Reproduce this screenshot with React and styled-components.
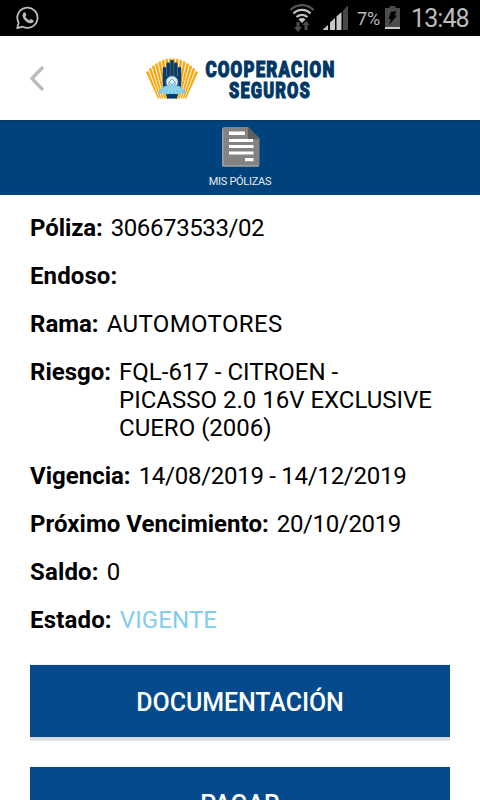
import React from 'react';
import styled, { createGlobalStyle } from 'styled-components';

const Global = createGlobalStyle`
  * { box-sizing: border-box; }
  html, body { margin: 0; height: 100%; overflow: hidden; background: #fff; }
  body { font-family: Roboto, sans-serif; }
`;

const Screen = styled.div`
  display: flex;
  flex-direction: column;
  width: 480px;
  height: 800px;
  overflow: hidden;
  background: #fff;
  color: #000;
`;

const StatusBar = styled.div`
  display: flex;
  flex: none;
  align-items: center;
  justify-content: space-between;
  height: 36px;
  padding: 0 12px 0 16px;
  background: #000;
  color: #bcbcbc;
`;

const StatusGroup = styled.div`
  display: flex;
  align-items: center;
`;

const Network = styled.div`
  display: flex;
  align-items: center;
  gap: 8px;
`;

const Battery = styled.span`
  width: 24px;
  margin: 2px 4px 0 9px;
  font-size: 18px;
  line-height: 20px;
  white-space: nowrap;
`;

const Clock = styled.span`
  width: 57px;
  margin: 2px 0 0 11px;
  font-size: 25px;
  line-height: 30px;
  letter-spacing: -0.9px;
  white-space: nowrap;
`;

const Header = styled.header`
  display: grid;
  grid-template-columns: 145px 1fr 145px;
  align-items: center;
  flex: none;
  height: 84px;
`;

const BackButton = styled.button`
  display: flex;
  margin: 0 0 0 28px;
  padding: 0;
  width: 18px;
  border: 0;
  background: none;
`;

const TabBar = styled.nav`
  display: flex;
  flex: none;
  flex-direction: column;
  align-items: center;
  height: 75px;
  padding-top: 6px;
  border-top: 1px solid #14365e;
  background: #00427c;
`;

const TabLabel = styled.span`
  margin-top: 8px;
  color: #e4ebf2;
  font-size: 11px;
  line-height: 14px;
  letter-spacing: -0.3px;
`;

const Details = styled.dl`
  display: flex;
  flex: none;
  flex-direction: column;
  gap: 20px;
  margin: 0;
  padding: 19px 40px 0 30px;
`;

const Row = styled.div`
  display: flex;
  gap: 8px;
  font-size: 24px;
  line-height: 28px;
`;

const Label = styled.dt`
  flex: none;
  font-weight: 700;
  letter-spacing: ${(p) => p.$tracking || 0}px;
`;

const Value = styled.dd`
  margin: 0;
  color: ${(p) => (p.$active ? '#80cdf0' : '#000')};
  letter-spacing: ${(p) => p.$tracking || 0}px;
`;

const Actions = styled.div`
  display: flex;
  flex: none;
  flex-direction: column;
  gap: 30px;
  padding: 31px 30px 0;
`;

const ActionButton = styled.button`
  height: 72px;
  padding: 3px 0 0;
  border: 0;
  background: #044a8c;
  box-shadow: 0 3px 0 #d6dadd, 0 4px 0 #e9e9e9, 0 -1px 0 #f3f3f3;
  color: #fff;
  font-family: inherit;
  font-size: 25px;
  font-weight: 500;
  line-height: 30px;
  letter-spacing: -0.07px;
`;

const WhatsAppIcon = () => (
  <svg width="23" height="24" viewBox="0 0 23 24">
    <path d="M1.200 22.200 2.700 16.800A10.100 10.100 0 1 1 6.800 20.700Z" fill="none" stroke="#bcbcbc" strokeWidth="1.800" strokeLinejoin="round" />
    <path d="M7.600 6.800c.6-.7 1.500-.7 1.800 0l.9 2c.2.6-.7 1.300-.9 1.800.8 1.800 2.100 3 4 3.800.6-.2 1.100-1.400 1.700-1.300l2.200 1.100c.7.4.2 1.800-.5 2.400-2 1.600-5.200.1-7.200-1.700-2.200-1.900-4.300-5.500-2-8.100Z" fill="#bcbcbc" />
  </svg>
);

const WifiIcon = () => (
  <svg width="26" height="28" viewBox="0 0 26 28">
    <g fill="none" strokeWidth="2.300">
      <path d="M1.500 6a16 16 0 0 1 23 0" stroke="#555" />
      <path d="M4.500 9.500a11.800 11.800 0 0 1 17 0M7.500 13a8 8 0 0 1 11 0" stroke="#c4c4c4" />
    </g>
    <path d="M9.500 15.500a5 5 0 0 1 7 0L13 19Z" fill="#c4c4c4" />
    <path d="M7.500 18h3v5h2.500l-4 5-4-5h2.500ZM15.500 26v-5H13l4-4 4 4h-2.500v5Z" fill="#4c4c4c" />
  </svg>
);

const SignalIcon = () => (
  <svg width="25" height="26" viewBox="0 0 25 26">
    <path d="M0 25v-.5L5 20v5ZM7 25v-7.500L12 13v12ZM13.500 25V11.500L18.500 7v18Z" fill="#c8c8c8" />
    <path d="M20 25V5.500L25 .5V25Z" fill="#484848" />
  </svg>
);

const BatteryIcon = () => (
  <svg width="15" height="24" viewBox="0 0 15 24">
    <path d="M0 2h4.500V0h6v2H15v20H0Z" fill="#4c4c4c" />
    <path d="M6 5.500h5.500L9.500 9.500H12L4 19l2-6H3.500Z" fill="#000" />
    <path d="M0 21h15v2H0Z" fill="#c8c8c8" />
  </svg>
);

const BackIcon = () => (
  <svg width="18" height="28" viewBox="0 0 18 28">
    <path d="M15 3 4 14.500 15 26" fill="none" stroke="#bcbcbc" strokeWidth="3.400" />
  </svg>
);

const DocumentIcon = () => (
  <svg width="40" height="40" viewBox="0 0 40 40">
    <path d="M2.500 1.500q0-1.500 1.500-1.500h24l11.500 11.500v26q0 2-2 2H2.500Z" fill="#838383" />
    <path d="M2.800 1.500V39H39" fill="none" stroke="#b2b5b8" />
    <path d="M9 4.500h16V8H9ZM9 12h24v3H9ZM9 18h24.500v3H9ZM9 24.500h24.500v3H9ZM25 31h8.500v3.200H25Z" fill="#fff" />
    <path d="M28 0v12h11.500Z" fill="#5f5f5f" />
  </svg>
);

const rays = [
  [2.200, 18.500, 13.500],
  [5, 15.500, 15.600],
  [8, 12.800, 17.700],
  [11.200, 10.400, 19.800],
  [14.600, 8.500, 21.300],
  [18, 7, 22.800],
  [21.600, 6, 24.300],
  [25.200, 5.400, 25.800],
];

const rayPath = ([x, y, foot]) =>
  `M${x - 1.200} ${y + 0.5}L${x + 1.200} ${y - 0.5}L${foot + 0.7} 45.500H${foot - 0.7}Z`;

const fingers = [
  [19.500, 15.500, 32],
  [23.200, 11, 30],
  [27, 8.500, 28],
  [30.800, 11, 30],
  [34.500, 15.500, 32],
];

const Logo = () => (
  <svg width="190" height="50" viewBox="0 0 190 50">
    <g fill="#fba60f">
      {rays.map((ray) => (
        <React.Fragment key={ray[0]}>
          <path d={rayPath(ray)} />
          <path d={rayPath(ray)} transform="matrix(-1 0 0 1 54 0)" />
        </React.Fragment>
      ))}
    </g>
    <g stroke="#053c70" strokeWidth="3.500" strokeLinecap="round">
      {fingers.map(([x, y1, y2]) => (
        <line key={x} x1={x} y1={y1} x2={x} y2={y2} />
      ))}
    </g>
    <path d="M18 23h18v11H18Z" fill="#053c70" />
    <circle cx="27" cy="29" r="6" fill="#dcebf3" stroke="#6b94b1" strokeWidth=".8" />
    <path d="M24 33v-4l3-3 3 3v4M23.500 29l3.500 3 3.500-3" fill="none" stroke="#6897b4" strokeWidth=".8" />
    <path d="M21 40h12l-1 5.500H22Z" fill="#053c70" />
    <path d="M19.500 33 27 32 34.500 33 42 39.500 34 41H20L12 39.500Z" fill="#7dcdeb" />
    <path d="m22 34-4 6M27 33v7m5-6 4 6M25 34l-2 6M29 34l2 6" stroke="#b1dff0" strokeWidth=".7" />
    <g fill="#003766" stroke="#003766" strokeWidth="1.100" fontFamily="Roboto, sans-serif" fontWeight="900" letterSpacing="1.500">
      <text x="60.500" y="24" fontSize="21.500" textLength="130" lengthAdjust="spacingAndGlyphs">COOPERACION</text>
      <text x="84" y="45" fontSize="21.500" textLength="82" lengthAdjust="spacingAndGlyphs">SEGUROS</text>
    </g>
  </svg>
);

const policy = [
  { label: 'Póliza:', value: '306673533/02', tracking: -0.4, labelTracking: -0.1 },
  { label: 'Endoso:', value: '', labelTracking: 0.1 },
  { label: 'Rama:', value: 'AUTOMOTORES', tracking: 0.38 },
  { label: 'Riesgo:', value: 'FQL-617 - CITROEN - PICASSO 2.0 16V EXCLUSIVE CUERO (2006)' },
  { label: 'Vigencia:', value: '14/08/2019 - 14/12/2019', tracking: -0.27 },
  { label: 'Próximo Vencimiento:', value: '20/10/2019', tracking: -0.35, labelTracking: 0.03 },
  { label: 'Saldo:', value: '0', labelTracking: 0.15 },
  { label: 'Estado:', value: 'VIGENTE', tracking: 0.1, labelTracking: 0.17, active: true },
];

export default function App() {
  return (
    <Screen>
      <Global />
      <StatusBar>
        <WhatsAppIcon />
        <StatusGroup>
          <Network>
            <WifiIcon />
            <SignalIcon />
          </Network>
          <Battery>7%</Battery>
          <BatteryIcon />
          <Clock>13:48</Clock>
        </StatusGroup>
      </StatusBar>
      <Header>
        <BackButton aria-label="Volver"><BackIcon /></BackButton>
        <Logo />
      </Header>
      <TabBar>
        <DocumentIcon />
        <TabLabel>MIS PÓLIZAS</TabLabel>
      </TabBar>
      <Details>
        {policy.map((item) => (
          <Row key={item.label}>
            <Label $tracking={item.labelTracking}>{item.label}</Label>
            <Value $active={item.active} $tracking={item.tracking}>{item.value}</Value>
          </Row>
        ))}
      </Details>
      <Actions>
        <ActionButton>DOCUMENTACIÓN</ActionButton>
        <ActionButton>PAGAR</ActionButton>
      </Actions>
    </Screen>
  );
}
